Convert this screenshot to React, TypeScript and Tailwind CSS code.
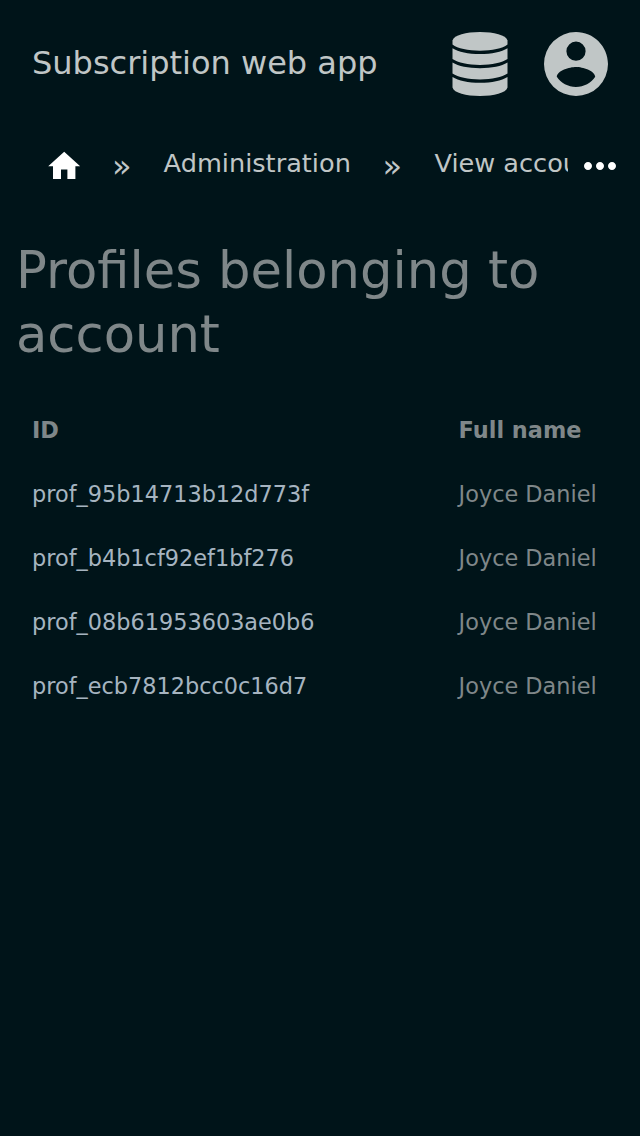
import React from "react";
import { MdHome, MdMoreHoriz } from "react-icons/md";

const profiles = [
  { id: "prof_95b14713b12d773f", name: "Joyce Daniel" },
  { id: "prof_b4b1cf92ef1bf276", name: "Joyce Daniel" },
  { id: "prof_08b61953603ae0b6", name: "Joyce Daniel" },
  { id: "prof_ecb7812bcc0c16d7", name: "Joyce Daniel" },
];

function DatabaseIcon() {
  return (
    <svg viewBox="0 0 64 64" className="size-16" fill="currentColor" aria-hidden="true">
      <path d="M4.500 8.500C6 3 18 0 32 0s26 3 27.500 8.500V12.500C54.500 16.500 44 18.700 32 18.700S9.500 16.500 4.500 12.500Z" />
      <path d="M4.500 16.200C10.500 20 20 22 32 22s21.500-2 27.500-5.800V27C54 30.800 44 32.900 32 32.900S10 30.800 4.500 27Z" />
      <path d="M4.500 30.600C10.500 34.300 20 36.300 32 36.300s21.500-2 27.500-5.700V41.500C54 45.300 44 47.400 32 47.400S10 45.300 4.500 41.500Z" />
      <path d="M4.500 45C10.500 48.800 20 50.800 32 50.800s21.500-2 27.500-5.800v10.500C58 61 46 64 32 64S6 61 4.500 55.500Z" />
    </svg>
  );
}

function AccountIcon() {
  return (
    <svg viewBox="2 2 20 20" className="size-16" fill="currentColor" aria-hidden="true">
      <path d="M12,19.2C9.5,19.2 7.29,17.92 6,16C6.03,14 10,12.9 12,12.9C14,12.9 17.97,14 18,16C16.71,17.92 14.5,19.2 12,19.2M12,5A3,3 0 0,1 15,8A3,3 0 0,1 12,11A3,3 0 0,1 9,8A3,3 0 0,1 12,5M12,2A10,10 0 0,0 2,12A10,10 0 0,0 12,22A10,10 0 0,0 22,12C22,6.47 17.5,2 12,2Z" />
    </svg>
  );
}

export default function App() {
  return (
    <div className="min-h-[1136px] w-[640px] overflow-hidden bg-[#001419] font-['DejaVu_Sans',sans-serif] text-[#7f8789]">
      <header className="flex h-32 items-center justify-between px-8 text-[#c0c6c6]">
        <span className="pb-0.5 text-[32px] leading-[48px]">Subscription web app</span>
        <div className="flex items-center gap-8">
          <DatabaseIcon />
          <AccountIcon />
        </div>
      </header>
      <nav className="flex h-[72px] items-center text-[25.6px] text-[#c0c6c6]">
        <div className="flex w-[568px] items-center overflow-hidden whitespace-nowrap pl-[44.8px]">
          <MdHome className="mt-[5px] size-[38.4px] shrink-0 text-white" />
          <span className="ml-[28.8px] w-[18px] pt-1 text-[32px]">»</span>
          <span className="ml-[33.6px] pb-0.5">Administration</span>
          <span className="ml-[31.6px] w-[18px] pt-1 text-[32px]">»</span>
          <span className="ml-[34px] pb-0.5">View account</span>
        </div>
        <MdMoreHoriz className="ml-2 mt-1 size-12 shrink-0 text-white" />
      </nav>
      <main>
        <h1 className="px-4 pt-[38px] text-[51.2px] leading-[64px]">Profiles belonging to account</h1>
        <table className="mt-[33px] w-full table-fixed text-left text-[22.4px]">
          <thead>
            <tr className="h-16">
              <th className="w-[426.6px] pl-8">ID</th>
              <th className="pl-8">Full name</th>
            </tr>
          </thead>
          <tbody>
            {profiles.map((p) => (
              <tr key={p.id} className="h-16">
                <td className="pl-8 text-[#a6b4c0]">{p.id}</td>
                <td className="pl-8">{p.name}</td>
              </tr>
            ))}
          </tbody>
        </table>
      </main>
    </div>
  );
}
